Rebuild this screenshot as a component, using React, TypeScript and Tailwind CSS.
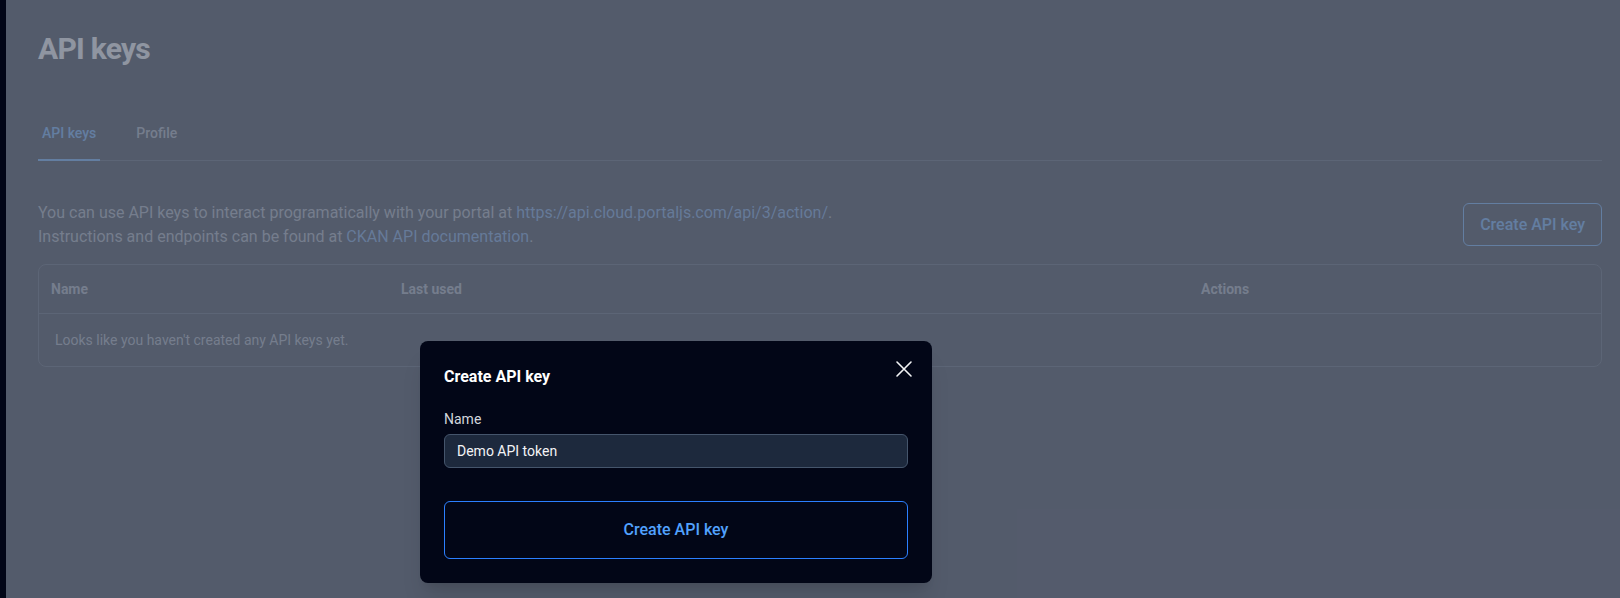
import { useState } from 'react';

function CloseIcon({ className }: { className?: string }) {
    return (
        <svg viewBox="0 0 24 24" fill="none" stroke="currentColor" strokeWidth={1.6} strokeLinecap="round" className={className}>
            <path d="M5 5l14 14M19 5L5 19" />
        </svg>
    );
}

export default function App() {
    const [name, setName] = useState('Demo API token');

    return (
        <div className="relative min-h-[598px] w-full bg-gray-900 overflow-hidden" style={{ fontFamily: 'Roboto, "Noto Sans", sans-serif' }}>
            <div className="flex min-h-[598px]">
                {/* sidebar edge */}
                <div className="relative z-20 w-[6px] shrink-0 bg-[#020617]" />

                {/* main */}
                <main className="flex-1 pl-8 pr-[18px] pt-[31px]">
                    <h1 className="text-3xl font-bold tracking-tight text-white leading-9">API keys</h1>

                    <nav className="mt-10 flex gap-8 border-b border-gray-700">
                        <span className="px-1 pt-4 pb-4 text-sm font-medium text-blue-400 border-b-2 border-blue-400 -mb-px">API keys</span>
                        <span className="px-1 pt-4 pb-4 text-sm font-medium text-gray-400">Profile</span>
                    </nav>

                    <div className="mt-10 flex items-center justify-between">
                        <p className="text-base leading-6 text-gray-400">
                            You can use API keys to interact programatically with your portal at{' '}
                            <a className="text-[#5b93dc]">https://api.cloud.portaljs.com/api/3/action/</a>.
                            <br />
                            Instructions and endpoints can be found at <a className="text-[#5b93dc]">CKAN API documentation</a>.
                        </p>
                        <button className="-mt-px h-[43px] px-4 rounded-md border border-blue-400 text-base font-medium text-blue-400">
                            Create API key
                        </button>
                    </div>

                    <div className="mt-[15px] rounded-lg border border-gray-700">
                        <div className="grid grid-cols-[350px_800px_1fr] border-b border-gray-700 text-sm font-bold text-gray-400">
                            <div className="px-3 py-3.5">Name</div>
                            <div className="px-3 py-3.5">Last used</div>
                            <div className="px-3 py-3.5">Actions</div>
                        </div>
                        <div className="px-4 py-4 text-sm text-gray-400">Looks like you haven't created any API keys yet.</div>
                    </div>
                </main>
            </div>

            {/* overlay */}
            <div className="absolute inset-0 z-10 bg-gray-500/75" />

            {/* dialog */}
            <div className="absolute z-30 left-[420px] top-[341px] w-[512px] rounded-lg bg-[#020617] p-6 shadow-xl">
                <button className="absolute right-4 top-4 text-gray-100">
                    <CloseIcon className="w-6 h-6" />
                </button>
                <h3 className="text-base font-bold leading-6 text-white">Create API key</h3>
                <label className="mt-5 block text-sm text-gray-300">Name</label>
                <input
                    value={name}
                    onChange={(e) => setName(e.target.value)}
                    className="mt-[5px] block w-full h-[34px] rounded-md border border-slate-600 bg-slate-800 px-3 text-sm text-gray-100 outline-none"
                />
                <button className="mt-[33px] w-full h-[58px] rounded-md border border-blue-500 text-base font-medium text-blue-400">
                    Create API key
                </button>
            </div>
        </div>
    );
}
